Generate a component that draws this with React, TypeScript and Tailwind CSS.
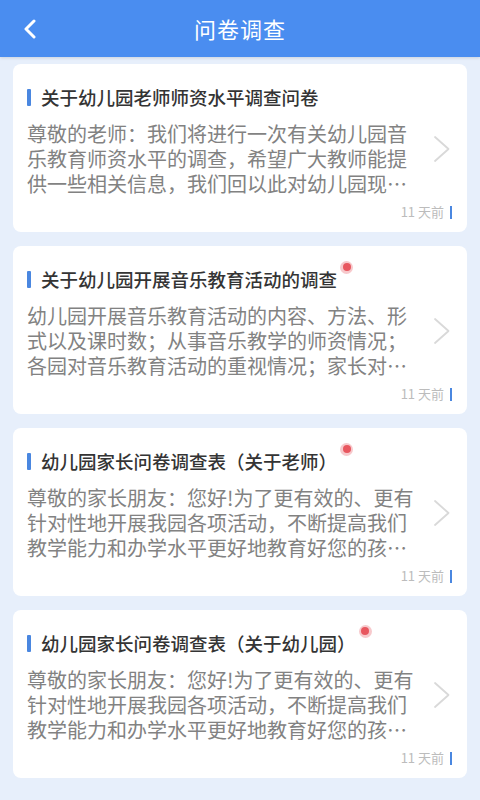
import React from "react";

type Survey = {
    title: string;
    body: string;
    time: string;
    unread: boolean;
};

const surveys: Survey[] = [
    {
        title: "关于幼儿园老师师资水平调查问卷",
        body: "尊敬的老师：我们将进行一次有关幼儿园音乐教育师资水平的调查，希望广大教师能提供一些相关信息，我们回以此对幼儿园现状进行分析和研究，谢谢您的配合。",
        time: "11 天前",
        unread: false,
    },
    {
        title: "关于幼儿园开展音乐教育活动的调查",
        body: "幼儿园开展音乐教育活动的内容、方法、形式以及课时数；从事音乐教学的师资情况；各园对音乐教育活动的重视情况；家长对音乐教育的态度等。",
        time: "11 天前",
        unread: true,
    },
    {
        title: "幼儿园家长问卷调查表（关于老师）",
        body: "尊敬的家长朋友：您好!为了更有效的、更有针对性地开展我园各项活动，不断提高我们教学能力和办学水平更好地教育好您的孩子，请您认真填写。",
        time: "11 天前",
        unread: true,
    },
    {
        title: "幼儿园家长问卷调查表（关于幼儿园）",
        body: "尊敬的家长朋友：您好!为了更有效的、更有针对性地开展我园各项活动，不断提高我们教学能力和办学水平更好地教育好您的孩子，请您认真填写。",
        time: "11 天前",
        unread: true,
    },
];

const SurveyCard = ({ item }: { item: Survey }) => (
    <div className="bg-white rounded-lg pl-[14px] pr-[15px] pt-[21px] pb-[12px]">
        {/* Title */}
        <div className="flex items-center h-[24px]">
            <div className="w-[4px] h-[17px] bg-[#4a87e0] rounded-[1px]" />
            <div className="relative ml-[10px]">
                <span className="text-[18.5px] leading-[24px] font-medium text-[#343434]">{item.title}</span>
                {item.unread && (
                    <span className="absolute -right-[16px] -top-[6px] w-[13px] h-[13px] rounded-full bg-[#f7c9cc] flex items-center justify-center">
                        <span className="w-[8px] h-[8px] rounded-full bg-[#e8575f]" />
                    </span>
                )}
            </div>
        </div>

        {/* Body */}
        <div className="flex items-center mt-[12px]">
            <p className="w-[392px] text-[20px] leading-[25px] text-[#828282] line-clamp-3">{item.body}</p>
            <svg className="ml-auto mr-[1px] mb-[20px]" width="18" height="28" viewBox="0 0 18 28" fill="none">
                <polyline points="2,2 15.5,14 2,26" stroke="#d9d9d9" strokeWidth="1.8" strokeLinecap="round" strokeLinejoin="round" />
            </svg>
        </div>

        {/* Footer */}
        <div className="flex items-center justify-end mt-[8px] h-[16px]">
            <span className="text-[13px] leading-[16px] text-[#bcbcbc]">{item.time}</span>
            <span className="ml-[6px] w-[2px] h-[13px] bg-[#4a87e0]" />
        </div>
    </div>
);

export default function App() {
    return (
        <div
            className="w-[480px] min-h-[800px] bg-[#e7effb]"
            style={{ fontFamily: '"Noto Sans CJK SC", "Noto Sans", sans-serif' }}
        >
            {/* Header */}
            <div className="h-[57px] bg-[#4a8df0] grid grid-cols-[60px_1fr_60px] items-center shadow-[0_1px_3px_rgba(0,0,0,0.12)]">
                <div className="pl-[22px] flex items-center">
                    <svg width="16" height="20" viewBox="0 0 16 20" fill="none">
                        <polyline points="12,2 4,10 12,18" stroke="#ffffff" strokeWidth="3" strokeLinecap="round" strokeLinejoin="round" />
                    </svg>
                </div>
                <h1 className="text-center text-[22px] text-white font-normal tracking-[1px]">问卷调查</h1>
                <div />
            </div>

            {/* List */}
            <div className="px-[13px] pt-[7px] pb-[20px] flex flex-col gap-[14px]">
                {surveys.map((s, i) => (
                    <SurveyCard key={i} item={s} />
                ))}
            </div>
        </div>
    );
}
